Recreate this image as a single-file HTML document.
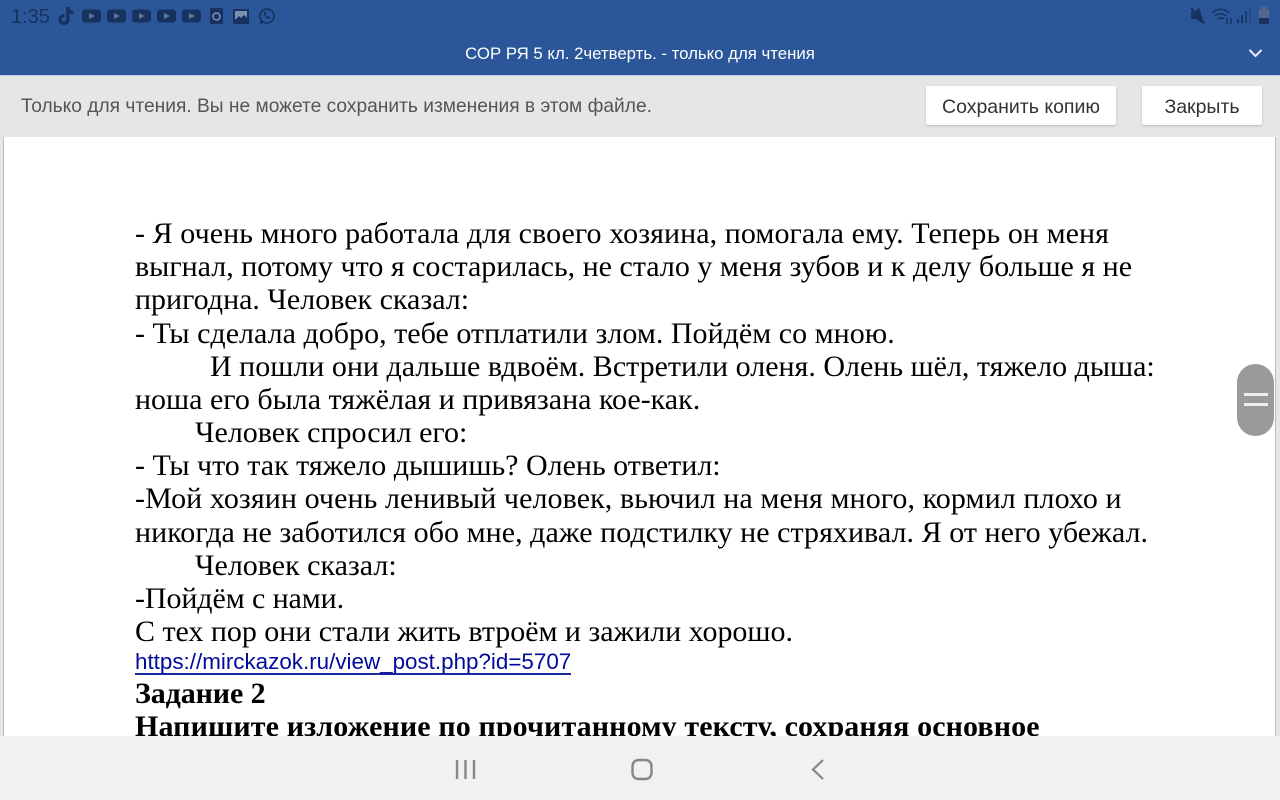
<!DOCTYPE html>
<html lang="ru"><head><meta charset="utf-8"><title>СОР РЯ</title>
<style>
html,body{margin:0;padding:0;width:1280px;height:800px;overflow:hidden;background:#fff}
*{box-sizing:border-box}
.a{position:absolute}
#top{left:0;top:0;width:1280px;height:75px;background:#2b579a}
#title{left:0;top:43px;width:1280px;text-align:center;color:#fff;font:16.8px/21px "Liberation Sans",sans-serif}
#time{left:11px;top:6px;color:#17325f;font:20px/22px "Liberation Sans",sans-serif}
#bar{left:0;top:75px;width:1280px;height:62px;background:#e6e6e6;border-top:1px solid #bcd0ee}
#msg{left:21px;top:96px;color:#555;font:19.2px/22px "Liberation Sans",sans-serif}
.btn{top:86px;height:39px;background:#fff;border-radius:2px;box-shadow:0 1px 2px rgba(0,0,0,.2);color:#333;font:19.5px/42px "Liberation Sans",sans-serif;text-align:center}
#l{left:0;top:137px;width:4px;height:599px;background:#e6e6e6;border-right:1px solid #bbb}
#r{left:1275px;top:137px;width:5px;height:599px;background:#e6e6e6;border-left:1px solid #bbb}
.t{position:absolute;left:135px;white-space:nowrap;color:#000;font:30px/34px "Liberation Serif","Noto Serif CJK SC",serif}
.b{font-weight:bold}
#link{left:135px;top:650px;white-space:nowrap;color:#000a9c;font:22.4px/24px "Liberation Sans",sans-serif;border-bottom:2px solid #1a2a9c;height:25px}
#clip{left:0;top:137px;width:1280px;height:599px;overflow:hidden}
#nav{left:0;top:736px;width:1280px;height:64px;background:#f1f1f1}
#thumb{left:1237px;top:364px;width:37px;height:72px;border-radius:18.5px;background:#9a9a9a}
#thumb i{position:absolute;left:7px;width:24px;height:3px;background:#eee}
</style></head><body>
<div class="a" id="top"></div>
<div class="a" id="time">1:35</div>
<svg class="a" style="left:0;top:0" width="1280" height="75" viewBox="0 0 1280 75">
<g fill="#17325f">
<path d="M66 7h3.500c.2 2.200 1.800 3.800 4 4v3.300c-1.400 0-2.800-.4-4-1.200v6.400c0 3.200-2.500 5.500-5.500 5.500s-5.500-2.400-5.500-5.500 2.700-5.700 6-5.300v3.200c-1.500-.4-2.800.7-2.800 2s1.100 2.300 2.300 2.300 2.200-1 2.200-2.300z"/>
<rect x="82" y="9.500" width="19" height="13" rx="3"/><rect x="107" y="9.500" width="19" height="13" rx="3"/><rect x="132" y="9.500" width="19" height="13" rx="3"/><rect x="157" y="9.500" width="19" height="13" rx="3"/><rect x="182" y="9.500" width="19" height="13" rx="3"/>
<rect x="210" y="8" width="13" height="16" rx="1"/>
<rect x="233" y="9" width="16" height="15"/>
</g>
<g fill="#5f7597"><path d="M89 13l6 3-6 3z"/><path d="M114 13l6 3-6 3z"/><path d="M139 13l6 3-6 3z"/><path d="M164 13l6 3-6 3z"/><path d="M189 13l6 3-6 3z"/></g>
<circle cx="216.500" cy="16.500" r="3.500" fill="none" stroke="#7e93b5" stroke-width="1.500"/>
<path d="M235 11h12v7l-3-3-3 3-2-2-4 4z" fill="#7a90b3"/>
<circle cx="267" cy="16" r="7" fill="none" stroke="#17325f" stroke-width="1.700"/>
<path d="M259.500 24.500l1.500-5.500 3.500 3.500z" fill="#17325f"/>
<path d="M264 12.500c-.5 3 2.500 6.500 6 6.500l.5-2-2-1-1 .8c-1-.5-1.700-1.300-2-2.300l.8-1-1-2z" fill="#17325f"/>
<g fill="#17325f">
<path d="M1191 12h3.500l4.500-4 1 2 3 10-2 1 .5 2-5.500-4h-5z"/>
<path d="M1190.500 9l1.500-1.500 13 15-1.500 1.500z"/>
</g>
<g fill="none" stroke="#17325f" stroke-width="1.600">
<path d="M1212 13c5-5 12-5 17 0"/><path d="M1215 16c3-3 8-3 11 0" /><path d="M1218 19c2-1.500 4-1.500 6 0"/>
</g>
<path d="M1227 24v-6M1231 24v-6" stroke="#17325f" stroke-width="1.500"/>
<g fill="#17325f"><rect x="1237" y="19" width="2" height="4"/><rect x="1241" y="15" width="2" height="8"/><rect x="1245" y="11" width="2" height="12" opacity=".7"/><rect x="1249" y="8" width="1.500" height="15" opacity=".4"/></g>
<rect x="1259" y="9" width="10" height="15" rx="1" fill="#51688c"/><rect x="1261.500" y="7" width="5" height="2" fill="#51688c"/><rect x="1259" y="18" width="10" height="6" fill="#17325f"/>
<path d="M1249.500 50l6 6 6-6" fill="none" stroke="#e8eef8" stroke-width="2"/>
</svg>
<div class="a" id="title">СОР РЯ 5 кл. 2четверть. - только для чтения</div>
<div class="a" id="bar"></div>
<div class="a" id="msg">Только для чтения. Вы не можете сохранить изменения в этом файле.</div>
<div class="a btn" style="left:926px;width:190px">Сохранить копию</div>
<div class="a btn" style="left:1142px;width:120px">Закрыть</div>
<div class="a" id="l"></div><div class="a" id="r"></div>
<div class="a" id="clip">
<div style="position:absolute;left:0;top:-137px;width:1280px;height:800px">
<div class="t" style="top:217px;letter-spacing:.074px">- Я очень много работала для своего хозяина, помогала ему. Теперь он меня</div>
<div class="t" style="top:250px">выгнал, потому что я состарилась, не стало у меня зубов и к делу больше я не</div>
<div class="t" style="top:283px">пригодна. Человек сказал:</div>
<div class="t" style="top:317px;letter-spacing:.02px">- Ты сделала добро, тебе отплатили злом. Пойдём со мною.</div>
<div class="t" style="top:350px;left:210px">И пошли они дальше вдвоём. Встретили оленя. Олень шёл, тяжело дыша:</div>
<div class="t" style="top:383px">ноша его была тяжёлая и привязана кое-как.</div>
<div class="t" style="top:416px;left:195px">Человек спросил его:</div>
<div class="t" style="top:449px">- Ты что так тяжело дышишь? Олень ответил:</div>
<div class="t" style="top:482px;letter-spacing:.085px">-Мой хозяин очень ленивый человек, вьючил на меня много, кормил плохо и</div>
<div class="t" style="top:516px;letter-spacing:.045px">никогда не заботился обо мне, даже подстилку не стряхивал. Я от него убежал.</div>
<div class="t" style="top:549px;left:195px">Человек сказал:</div>
<div class="t" style="top:582px;letter-spacing:-.1px">-Пойдём с нами.</div>
<div class="t" style="top:615px;letter-spacing:-.03px">С тех пор они стали жить втроём и зажили хорошо.</div>
<div class="a" id="link">https://mirckazok.ru/view_post.php?id=5707</div>
<div class="t b" style="top:677px;letter-spacing:-.1px">Задание 2</div>
<div class="t b" style="top:710px;letter-spacing:.115px">Напишите изложение по прочитанному тексту, сохраняя основное</div>
</div></div>
<div class="a" id="nav"></div>
<svg class="a" style="left:0;top:736px" width="1280" height="64" viewBox="0 736 1280 64">
<g fill="none" stroke="#868686" stroke-width="2.400">
<path d="M457 760v19M465.500 760v19M474 760v19"/>
<rect x="632.500" y="760" width="19" height="19" rx="6"/>
<path d="M823 760l-10 9.500 10 9.500" stroke-width="2.200"/>
</g></svg>
<div class="a" id="thumb"><i style="top:29px"></i><i style="top:39px"></i></div>
</body></html>
